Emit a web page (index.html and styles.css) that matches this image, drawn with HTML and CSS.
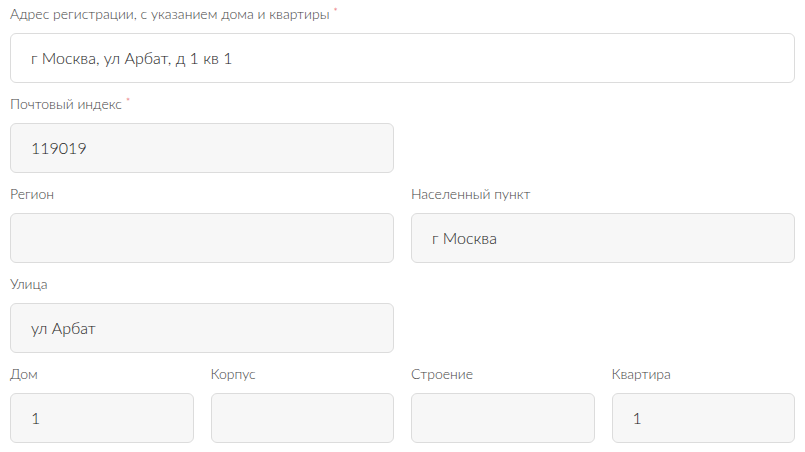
FILE: index.html
```html
<!DOCTYPE html>
<html lang="ru">
<head>
<meta charset="utf-8">
<link rel="stylesheet" href="styles.css">
</head>
<body>
<form class="form">
  <div class="field span-4">
    <div class="label">Адрес регистрации, с указанием дома и квартиры <span class="req">*</span></div>
    <div class="input white">г Москва, ул Арбат, д 1 кв 1</div>
  </div>
  <div class="field span-2">
    <div class="label">Почтовый индекс <span class="req">*</span></div>
    <div class="input">119019</div>
  </div>
  <div class="field span-2 empty-col"></div>
  <div class="field span-2">
    <div class="label">Регион</div>
    <div class="input"></div>
  </div>
  <div class="field span-2">
    <div class="label">Населенный пункт</div>
    <div class="input">г Москва</div>
  </div>
  <div class="field span-2">
    <div class="label">Улица</div>
    <div class="input">ул Арбат</div>
  </div>
  <div class="field span-2 empty-col"></div>
  <div class="field">
    <div class="label">Дом</div>
    <div class="input">1</div>
  </div>
  <div class="field">
    <div class="label">Корпус</div>
    <div class="input"></div>
  </div>
  <div class="field">
    <div class="label">Строение</div>
    <div class="input"></div>
  </div>
  <div class="field">
    <div class="label">Квартира</div>
    <div class="input">1</div>
  </div>
</form>
</body>
</html>
```
FILE: styles.css
```css
html, body {
  margin: 0;
  padding: 0;
  background: #ffffff;
}
body {
  font-family: Lato, "Liberation Sans", sans-serif;
}
.form {
  display: grid;
  grid-template-columns: repeat(4, 1fr);
  column-gap: 17px;
  row-gap: 11px;
  padding: 4px 10px 0 10px;
}
.span-4 { grid-column: span 4; }
.span-2 { grid-column: span 2; }
.label {
  font-size: 14px;
  font-weight: 300;
  line-height: 20px;
  height: 20px;
  color: #444444;
  margin-bottom: 9px;
  white-space: nowrap;
}
.req {
  color: #e5484d;
  font-size: 11px;
  line-height: 0;
  vertical-align: 3px;
}
.input {
  box-sizing: border-box;
  height: 50px;
  border: 1px solid #dcdcdc;
  border-radius: 6px;
  background: #f7f7f7;
  font-size: 16px;
  font-weight: 300;
  line-height: 48px;
  color: #222222;
  padding-left: 20px;
}
.input.white {
  background: #ffffff;
}
```
